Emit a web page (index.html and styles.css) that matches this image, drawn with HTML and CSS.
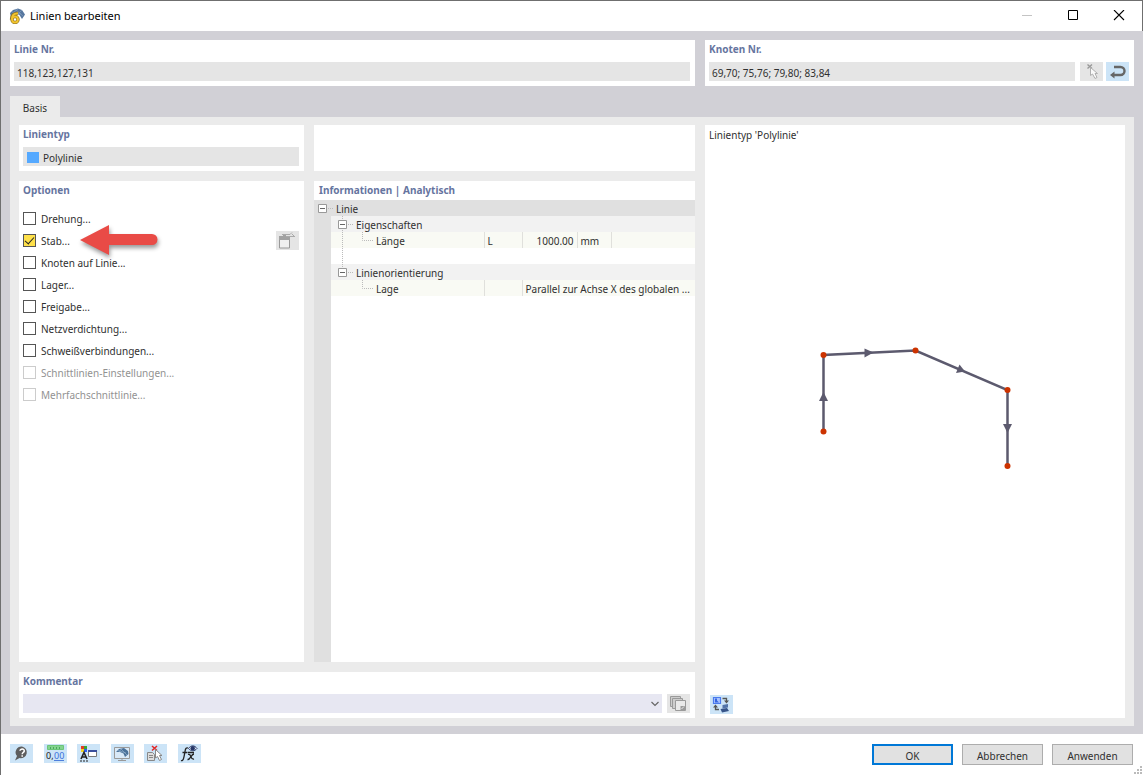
FILE: index.html
```
<!DOCTYPE html>
<html lang="de">
<head>
  <meta charset="UTF-8" />
  <meta name="viewport" content="width=device-width, initial-scale=1.0" />
  <title>Linien bearbeiten</title>
  <link rel="stylesheet" href="styles.css">
</head>
<body>
  <header class="titlebar">
    <svg class="logo" viewBox="0 0 16 16">
      <path fill="#56779f" d="M1 5L4 2L9 .5L13 2L16 6.500L13 11L10.500 7L6 5L2 9Z" />
      <path fill="none" stroke="#8ba5c5" stroke-width=".6" d="M3 4L12 6M6 1L14 8M5 4L9 1M10 5L13 2" />
      <path fill="none" stroke="#8d7426" stroke-width="3.400" d="M9 5.500C5 5 2.500 7.500 2.500 11.500" />
      <circle cx="6" cy="11.500" r="3" fill="none" stroke="#8d7426" stroke-width="3.400" />
      <path fill="none" stroke="#f2c42e" stroke-width="2" d="M9 5.500C5 5 2.700 7.500 3 11.500" />
      <circle cx="6" cy="11.500" r="2.900" fill="none" stroke="#f2c42e" stroke-width="2" />
    </svg>
    <h1>Linien bearbeiten</h1>
    <div class="window-buttons">
      <button class="win-btn" aria-label="Minimieren" disabled><svg viewBox="0 0 12 12"><path stroke="#c4c4c4" d="M1 5.500H11" /></svg></button>
      <button class="win-btn" aria-label="Maximieren"><svg viewBox="0 0 12 12"><path fill="none" stroke="#000" d="M1.500 .5H10.500V9.500H1.500Z" /></svg></button>
      <button class="win-btn" aria-label="Schließen"><svg viewBox="0 0 12 12"><path stroke="#000" stroke-width="1.100" d="M1 0L11 10M11 0L1 10" /></svg></button>
    </div>
  </header>

  <main class="content">
    <div class="top-row">
      <section class="panel">
        <label class="heading" for="lineNo">Linie Nr.</label>
        <div class="field-row">
          <input class="field" id="lineNo" type="text" value="118,123,127,131" readonly>
        </div>
      </section>
      <section class="panel">
        <label class="heading" for="nodeNo">Knoten Nr.</label>
        <div class="field-row">
          <input class="field" id="nodeNo" type="text" value="69,70; 75,76; 79,80; 83,84" readonly>
          <div class="button-pair">
            <button class="icon-btn off" aria-label="Auswählen" disabled>
              <svg viewBox="0 0 23 19"><path stroke="#999" stroke-width="1.400" d="M7.500 2.500L12 6.500M12 2.500L7.500 6.500" /><path fill="#fafafa" stroke="#b0b0b0" d="M10.500 5.500V13.500L12.500 12L15 16.500L17 15.500L15 11.500H17.500Z" /></svg>
            </button>
            <button class="icon-btn" aria-label="Umkehren">
              <svg viewBox="0 0 23 19"><path fill="none" stroke="#666" stroke-width="2.400" d="M8 5H14.500A4 4 0 0 1 14.500 13H7" /><path fill="#666" d="M4 13L8.500 9.500V16.500Z" /></svg>
            </button>
          </div>
        </div>
      </section>
    </div>

    <nav class="tabs">
      <button class="tab">Basis</button>
    </nav>

    <div class="page">
      <section class="panel type-panel">
        <h2 class="heading">Linientyp</h2>
        <div class="field type-field"><span class="swatch"></span>Polylinie</div>
      </section>

      <section class="panel"></section>

      <section class="panel options">
        <h2 class="heading">Optionen</h2>
        <ul class="option-list">
          <li><label><input type="checkbox"><span>Drehung...</span></label></li>
          <li>
            <label><input type="checkbox" checked><span>Stab...</span></label>
            <svg class="arrow" viewBox="0 0 84 36">
              <path fill="#e94b46" d="M3 17L32 2V11H75A5.500 5.500 0 0 1 75 22H32V32Z" />
            </svg>
            <button class="icon-btn off" aria-label="Stab bearbeiten" disabled>
              <svg viewBox="0 0 23 19"><path fill="#f0f0f0" stroke="#999" d="M3.500 7.500H13.500V17H3.500Z" /><path fill="#a2a2a2" d="M3 5H7V4H10V6H14V9H3Z" /><path fill="none" stroke="#aaa" d="M6 3.500H14L16 1.500M10 5.500H18M16 3L19 6" /></svg>
            </button>
          </li>
          <li><label><input type="checkbox"><span>Knoten auf Linie...</span></label></li>
          <li><label><input type="checkbox"><span>Lager...</span></label></li>
          <li><label><input type="checkbox"><span>Freigabe...</span></label></li>
          <li><label><input type="checkbox"><span>Netzverdichtung...</span></label></li>
          <li><label><input type="checkbox"><span>Schweißverbindungen...</span></label></li>
          <li><label class="disabled"><input type="checkbox" disabled><span>Schnittlinien-Einstellungen...</span></label></li>
          <li><label class="disabled"><input type="checkbox" disabled><span>Mehrfachschnittlinie...</span></label></li>
        </ul>
      </section>

      <section class="panel info">
        <h2 class="heading">Informationen | Analytisch</h2>
        <div class="tree">
          <table>
            <colgroup>
              <col class="c-gutter"><col class="c-name"><col class="c-symbol"><col class="c-value"><col class="c-unit"><col>
            </colgroup>
            <tbody>
              <tr class="root">
                <td colspan="6"><div class="node">
                  <button class="toggle" aria-label="Linie einklappen"><svg width="22" height="16" viewBox="0 0 22 16"><path fill="#fff" stroke="#999" d="M4.500 4.500H12.500V12.500H4.500Z" /><path stroke="#666" d="M6 8.500H11" /><path stroke="#bbb" stroke-dasharray="1 1" d="M14 8.500H19" /></svg></button>Linie</div></td>
              </tr>
              <tr class="group">
                <td class="gutter"></td>
                <td colspan="5"><div class="node">
                  <button class="toggle" aria-label="Eigenschaften einklappen"><svg width="25" height="16" viewBox="0 0 25 16"><path stroke="#bbb" stroke-dasharray="1 1" d="M11.500 0V16M17 8.500H22" /><path fill="#fff" stroke="#999" d="M7.500 4.500H15.500V12.500H7.500Z" /><path stroke="#666" d="M9 8.500H14" /></svg></button>Eigenschaften</div></td>
              </tr>
              <tr class="leaf">
                <td class="gutter"></td>
                <td><div class="node"><svg width="45" height="16" viewBox="0 0 45 16"><path fill="none" stroke="#bbb" stroke-dasharray="1 1" d="M11.500 0V16M31.500 0V8.500H42" /></svg>Länge</div></td>
                <td>L</td>
                <td class="num">1000.00</td>
                <td>mm</td>
                <td></td>
              </tr>
              <tr>
                <td class="gutter"></td>
                <td colspan="5"><div class="node"><svg width="45" height="16" viewBox="0 0 45 16"><path stroke="#bbb" stroke-dasharray="1 1" d="M11.500 0V16" /></svg></div></td>
              </tr>
              <tr class="group">
                <td class="gutter"></td>
                <td colspan="5"><div class="node">
                  <button class="toggle" aria-label="Linienorientierung einklappen"><svg width="25" height="16" viewBox="0 0 25 16"><path stroke="#bbb" stroke-dasharray="1 1" d="M11.500 0V4M17 8.500H22" /><path fill="#fff" stroke="#999" d="M7.500 4.500H15.500V12.500H7.500Z" /><path stroke="#666" d="M9 8.500H14" /></svg></button>Linienorientierung</div></td>
              </tr>
              <tr class="leaf">
                <td class="gutter"></td>
                <td><div class="node"><svg width="45" height="16" viewBox="0 0 45 16"><path fill="none" stroke="#bbb" stroke-dasharray="1 1" d="M31.500 0V8.500H42" /></svg>Lage</div></td>
                <td></td>
                <td colspan="3">Parallel zur Achse X des globalen ...</td>
              </tr>
            </tbody>
          </table>
        </div>
      </section>

      <section class="panel comment">
        <label class="heading" for="comment">Kommentar</label>
        <div class="field-row">
          <div class="combo">
            <select class="field" id="comment"><option></option></select>
            <svg class="chevron" viewBox="0 0 8 6"><path fill="none" stroke="#666" stroke-width="1.200" d="M.5 1L4 4.500L7.500 1" /></svg>
          </div>
          <button class="icon-btn off" aria-label="Kommentare" disabled>
            <svg viewBox="0 0 23 19"><g fill="#cdcdcd" stroke="#9a9a9a"><path d="M3.500 2.500H13.500V12.500H3.500Z" /><path d="M5.500 4.500H15.500V14.500H5.500Z" /><path fill="#e9e9e9" d="M8.500 6.500H18.500V16.500H8.500Z" /></g><path fill="#9a9a9a" d="M13.500 12H18V16H13.500Z" /><path stroke="#e9e9e9" d="M14.500 15L17 12.500" /></svg>
          </button>
        </div>
      </section>

      <section class="panel preview">
        <p>Linientyp 'Polylinie'</p>
        <svg class="drawing" viewBox="705 145 420 550">
          <path fill="none" stroke="#5c5a6e" stroke-width="2.500" d="M823.500 431V355L915.500 350.500L1007.500 390V466" />
          <g fill="#5c5a6e">
            <path d="M823.500 392L828 401H819Z" />
            <path d="M873.500 352.500L864.500 357.500V348.500Z" />
            <path d="M965 371.500L956 373L959.500 364.500Z" />
            <path d="M1007.500 433L1003 424H1012Z" />
          </g>
          <g fill="#cc3300">
            <circle cx="823.500" cy="431.500" r="3" />
            <circle cx="823.500" cy="355" r="3" />
            <circle cx="915.500" cy="350.500" r="3" />
            <circle cx="1007.500" cy="390" r="3" />
            <circle cx="1007.500" cy="466" r="3" />
          </g>
        </svg>
        <button class="icon-btn" aria-label="Ansicht wechseln">
          <svg viewBox="0 0 23 19"><path fill="#a9c4ff" stroke="#4a7aee" stroke-width="1.200" d="M3.500 2.500H10.500V8.500H3.500Z" /><path fill="#3565e0" d="M5 3.500H7V5.500L9 7.500H5Z" /><path fill="none" stroke="#555" stroke-width="1.300" d="M12.500 3.500H16.500V6M5.500 11V14.500H9" /><path fill="#555" d="M14 5.500H19L16.500 8.500ZM3 12.500L5.500 9.500L8 12.500Z" /><path fill="#5273a8" d="M12.500 10L18 9V12.500L12.500 13.500Z" /><path fill="#365489" d="M10.500 14L17 13L19 16L12 17.500Z" /></svg>
        </button>
      </section>
    </div>
  </main>

  <footer class="footer">
    <div class="tools">
      <button class="icon-btn" aria-label="Hilfe">
        <svg viewBox="0 0 23 19"><path fill="#5e5e5e" d="M12 2.500A6 5.800 0 1 1 9.500 14L5 16.500L7 12A6 5.800 0 0 1 12 2.500Z" /><path fill="none" stroke="#fff" stroke-width="1.500" d="M10 6.800C10 4.500 14.500 4.500 14.300 7C14 8.500 12.200 8.300 12.200 10.200M12.200 11.200V12.700" /></svg>
      </button>
      <button class="icon-btn" aria-label="Einheiten und Dezimalstellen">
        <svg viewBox="0 0 23 19"><path fill="#83d48e" stroke="#6cc47a" d="M3.500 1.500H19.500V5.500H3.500Z" /><path stroke="#4aa85b" d="M6.500 3V5M9.500 3V5M12.500 3V5M15.500 3V5" /><path stroke="#4d7fdd" d="M10 16.500H20" /><text x="2" y="15" font-size="9" fill="#222">0,</text><text x="10" y="15" font-size="9" fill="#3b70dc">00</text></svg>
      </button>
      <button class="icon-btn" aria-label="Anzeigeeigenschaften">
        <svg viewBox="0 0 23 19"><path fill="#e33b28" d="M4 2H7V5H4Z" /><path fill="#35a835" d="M7 2H10V5H7Z" /><path fill="#f1d525" d="M4 5H7V8H4Z" /><path fill="#2c5cf0" d="M7 5H10V8H7Z" /><path fill="none" stroke="#222" stroke-width="1.600" d="M4 15L7 8.500L10 15M5 13H9" /><path stroke="#222" stroke-dasharray="2 1" d="M3 17H12" /><path fill="#fff" stroke="#777" d="M11.500 6.500H19.500V12.500H11.500Z" /><path fill="#3a4f9c" d="M11 6H20V8H11Z" /></svg>
      </button>
      <button class="icon-btn" aria-label="Darstellung">
        <svg viewBox="0 0 23 19"><path fill="#d9e9f7" stroke="#999" d="M3.500 3.500H18.500V14.500H3.500ZM7 16.500H15M11 15V17" /><path fill="#4a7199" d="M5 8L8 5L13 4L17 7L17.500 10L14 13L12.500 9.500L9 8Z" /><path fill="none" stroke="#9ab8d4" stroke-width=".6" d="M7 6.500L15 9M10 5L16 11M8 8L11 4" /></svg>
      </button>
      <button class="icon-btn" aria-label="Auswahl aufheben">
        <svg viewBox="0 0 23 19"><path stroke="#e32727" stroke-width="1.500" d="M8 2L13 6.500M13 2L8 6.500" /><path fill="#ddd" stroke="#888" d="M3.500 8.500H8.500L10.500 10.500V16.500H3.500ZM5 11.500H9M5 13.500H9" /><path fill="#fff" stroke="#888" d="M11.500 5.500V14L13.500 12.500L15.500 16.500L17.500 15.500L15.500 11.500H18Z" /></svg>
      </button>
      <button class="icon-btn" aria-label="Formeln">
        <svg viewBox="0 0 23 19"><path fill="none" stroke="#222" stroke-width="1.300" d="M3 16.500C5.500 17.500 6 13 7 7.500C7.500 4 8.500 3.500 10 4M4.500 8.500H9.500M10 10.500C13.500 9 12 16 16 15M16 10C13 10 12.500 16 9.500 15.500M10 8.500H16" /><path fill="#dfe8f5" stroke="#263768" d="M10.500 4.500C13 1 16.500 1 19 4.500C16.500 7.500 13 7.500 10.500 4.500Z" /><circle cx="14.700" cy="4.200" r="2.200" fill="#263768" /></svg>
      </button>
    </div>
    <div class="actions">
      <button class="btn primary">OK</button>
      <button class="btn">Abbrechen</button>
      <button class="btn">Anwenden</button>
    </div>
    <svg class="grip" viewBox="0 0 9 9"><path fill="#bbb" d="M6 0H8V2H6ZM6 3H8V5H6ZM3 3H5V5H3ZM6 6H8V8H6ZM3 6H5V8H3ZM0 6H2V8H0Z" /></svg>
  </footer>
</body>
</html>
```
FILE: styles.css
```
* {
  box-sizing: border-box;
}
body {
  margin: 0;
  height: 100vh;
  display: flex;
  flex-direction: column;
  background: #fff;
  border-top: 1px solid #6f6f6f;
  border-left: 1px solid #6f6f6f;
  color: #303030;
  font-family: "Noto Sans", "Open Sans", sans-serif;
  font-size: 10px;
  line-height: 16px;
}
button, input, select {
  font: inherit;
  color: inherit;
  margin: 0;
}
h1, h2, p, ul {
  margin: 0;
  padding: 0;
}

/* title bar */
.titlebar {
  display: flex;
  align-items: center;
  height: 30px;
  padding-left: 8px;
  border-right: 1px solid #6f6f6f;
}
.logo {
  width: 16px;
  height: 16px;
  margin-right: 5px;
}
h1 {
  font-size: 11px;
  font-weight: 400;
  color: #000;
}
.window-buttons {
  display: flex;
  margin-left: auto;
}
.win-btn {
  display: flex;
  align-items: center;
  justify-content: center;
  width: 46px;
  height: 28px;
  padding: 0;
  border: none;
  background: none;
}
.win-btn svg {
  width: 12px;
  height: 12px;
}

/* panels and fields */
.content {
  flex: 1;
  display: flex;
  flex-direction: column;
  min-height: 0;
  padding: 9px 9px 8px;
  background: #d1d0d6;
}
.top-row {
  display: grid;
  grid-template-columns: 685fr 429fr;
  gap: 10px;
}
.panel {
  background: #fff;
  padding: 0 5px 5px 4px;
  min-width: 0;
}
.heading {
  display: block;
  height: 18px;
  margin-bottom: 4px;
  font-size: 10px;
  line-height: 18px;
  font-weight: 700;
  color: #66759f;
}
.field-row {
  display: flex;
  gap: 5px;
}
.field {
  flex: 1;
  min-width: 0;
  width: 100%;
  height: 19px;
  padding: 2px 3px 0;
  border: none;
  border-radius: 0;
  background: #e5e5e5;
}
.button-pair {
  display: flex;
  gap: 3px;
}
.icon-btn {
  flex: none;
  width: 23px;
  height: 19px;
  padding: 0;
  border: none;
  background: #cce4f7;
}
.icon-btn.off {
  background: #e5e5e5;
}
.icon-btn svg {
  display: block;
  width: 23px;
  height: 19px;
}

/* tab page */
.tabs {
  display: flex;
  margin-top: 10px;
}
.tab {
  width: 50px;
  height: 21px;
  padding: 2px 0 0;
  border: none;
  background: #ebebeb;
}
.page {
  flex: 1;
  display: grid;
  grid-template-columns: 285fr 381fr 420fr;
  grid-template-rows: 46px 1fr 46px;
  gap: 10px;
  min-height: 0;
  padding: 8px 9px;
  background: #ebebeb;
}
.type-field {
  display: flex;
  align-items: center;
  gap: 4px;
  padding: 2px 4px 0;
}
.swatch {
  width: 12px;
  height: 11px;
  background: #55a9ff;
}

/* options */
.option-list {
  margin-top: 8px;
  list-style: none;
}
.option-list li {
  position: relative;
  display: flex;
  align-items: center;
  justify-content: space-between;
  height: 22px;
}
.option-list label {
  display: flex;
  align-items: center;
  gap: 5px;
}
.option-list span {
  padding-top: 2px;
}
.option-list input {
  appearance: none;
  display: flex;
  align-items: center;
  justify-content: center;
  width: 13px;
  height: 13px;
  border: 1px solid #555;
  background: #fff;
}
.option-list input:checked {
  background: #ffe14a;
}
.option-list input:checked::before {
  content: "";
  width: 4px;
  height: 8px;
  margin-bottom: 2px;
  border: solid #222;
  border-width: 0 1px 1px 0;
  transform: rotate(42deg);
}
.option-list .disabled {
  color: #929292;
}
.option-list input:disabled {
  border-color: #ccc;
}
.arrow {
  position: absolute;
  left: 54px;
  top: -6px;
  width: 84px;
  height: 36px;
  filter: drop-shadow(1px 3px 2px rgba(0, 0, 0, 0.4));
}

/* property tree */
.info {
  display: flex;
  flex-direction: column;
  padding: 0;
}
.info .heading {
  margin-bottom: 1px;
  padding-left: 5px;
}
.tree {
  flex: 1;
  background: linear-gradient(to right, #e0e0e0 17px, #fff 17px);
}
table {
  width: 100%;
  table-layout: fixed;
  border-collapse: collapse;
}
.c-gutter {
  width: 17px;
}
.c-name {
  width: 153px;
}
.c-symbol {
  width: 38px;
}
.c-value {
  width: 55px;
}
.c-unit {
  width: 34px;
}
tr {
  height: 16px;
}
td {
  height: 16px;
  padding: 0;
  line-height: 14px;
  white-space: nowrap;
}
.node {
  display: flex;
  height: 16px;
  line-height: 18px;
}
.toggle {
  display: flex;
  padding: 0;
  border: none;
  background: none;
}
.root {
  background: #e0e0e0;
}
.group td:not(.gutter) {
  background: #f2f2f2;
}
.leaf td:not(.gutter) {
  background: #f9faf4;
}
.leaf td:nth-child(n+3) {
  padding: 2px 3px 0;
  border-left: 1px solid #e0e0dc;
}
.leaf .num {
  padding-right: 2px;
  text-align: right;
}

/* comment */
.comment {
  grid-column: 1 / 3;
  grid-row: 3;
}
.combo {
  position: relative;
  display: flex;
  flex: 1;
}
.combo .field {
  appearance: none;
  background: #e7e7f2;
}
.chevron {
  position: absolute;
  right: 3px;
  top: 7px;
  width: 8px;
  height: 6px;
}

/* preview */
.preview {
  grid-column: 3;
  grid-row: 1 / 4;
  display: flex;
  flex-direction: column;
  padding: 0 0 4px;
}
.preview p {
  height: 20px;
  padding-left: 4px;
  line-height: 21px;
}
.drawing {
  flex: 1;
  min-height: 0;
  width: 100%;
}
.preview .icon-btn {
  margin-left: 5px;
}

/* footer */
.footer {
  position: relative;
  display: flex;
  justify-content: space-between;
  height: 41px;
  padding: 10px 10px 0 9px;
}
.tools {
  display: flex;
  justify-content: space-between;
  width: 191px;
}
.actions {
  display: flex;
  gap: 9px;
}
.btn {
  width: 81px;
  height: 21px;
  padding: 2px 0 0;
  border: 1px solid #adadad;
  background: #e1e1e1;
  line-height: 16px;
}
.btn.primary {
  padding-top: 2px;
  border: 2px solid #0078d7;
}
.grip {
  position: absolute;
  right: 0;
  bottom: 0;
  width: 9px;
  height: 9px;
}
```
